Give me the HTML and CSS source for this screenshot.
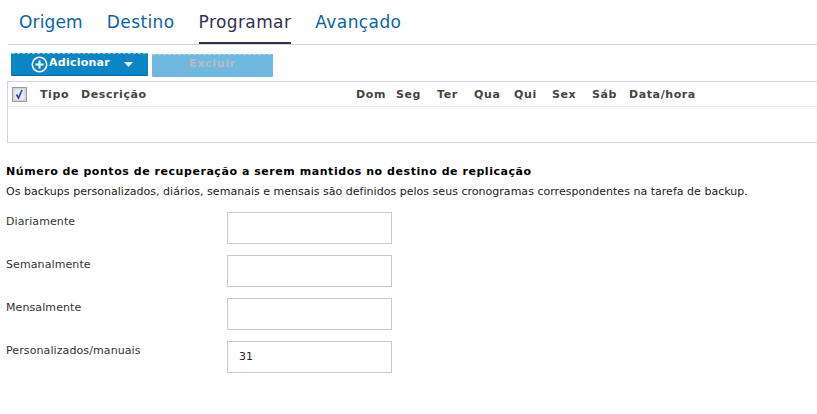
FILE: index.html
```html
<!DOCTYPE html>
<html lang="pt">
<head>
<meta charset="utf-8">
<title>Programar</title>
<link rel="stylesheet" href="styles.css">
</head>
<body>
<nav class="tabs">
  <a class="tab tab-first">Origem</a>
  <a class="tab">Destino</a>
  <a class="tab active">Programar</a>
  <a class="tab">Avançado</a>
</nav>
<div class="toolbar">
  <button class="btn btn-add">
    <svg class="plus" width="17" height="17" viewBox="0 0 17 17"><circle cx="8.5" cy="8.5" r="7.2" fill="none" stroke="#fff" stroke-width="1.6"/><path d="M8.5 4.5v8M4.5 8.5h8" stroke="#fff" stroke-width="2" fill="none"/></svg>
    <span>Adicionar</span>
    <svg class="caret" width="9" height="5" viewBox="0 0 9 5"><path d="M0 0h9L4.5 5z" fill="#fff"/></svg>
  </button>
  <button class="btn btn-del"><span>Excluir</span></button>
</div>
<section class="table">
  <div class="thead">
    <span class="check"><svg width="15" height="15" viewBox="0 0 15 15"><rect x=".5" y=".5" width="14" height="14" fill="#d4d6de" stroke="#9a9a9a"/><rect x="2.5" y="2.5" width="10" height="10" fill="#e8eaf4"/><path d="M4.5 7.5l2 3.5 3.5-8" fill="none" stroke="#2f3fa8" stroke-width="1.6"/></svg></span>
    <span>Tipo</span><span>Descrição</span><span>Dom</span><span>Seg</span><span>Ter</span><span>Qua</span><span>Qui</span><span>Sex</span><span>Sáb</span><span>Data/hora</span>
  </div>
  <div class="tbody"></div>
</section>
<section class="retention">
  <h2 class="title">Número de pontos de recuperação a serem mantidos no destino de replicação</h2>
  <p class="desc">Os backups personalizados, diários, semanais e mensais são definidos pelos seus cronogramas correspondentes na tarefa de backup.</p>
  <div class="form">
    <label class="label">Diariamente</label><input class="field" type="text">
    <label class="label">Semanalmente</label><input class="field" type="text">
    <label class="label">Mensalmente</label><input class="field" type="text">
    <label class="label">Personalizados/manuais</label><input class="field" type="text" value="31">
  </div>
</section>
</body>
</html>
```
FILE: styles.css
```css
* { box-sizing: border-box; }
html, body { margin: 0; padding: 0; background: #fff; }
body { width: 817px; height: 414px; overflow: hidden; font-family: "DejaVu Sans", sans-serif; font-size: 11px; color: #222; }
.tabs { display: flex; gap: 24px; margin-left: 8px; padding-left: 11px; height: 45px; border-bottom: 1px solid #d0d4dc; font-size: 17px; letter-spacing: .4px; }
.tab { height: 44px; padding-top: 11px; line-height: 22px; color: #0a64a8; white-space: nowrap; }
.tab-first { letter-spacing: .15px; }
.tab.active { color: #35304f; border-bottom: 2px solid #35304f; }
.toolbar { display: flex; gap: 4px; margin: 8px 0 0 11px; height: 24px; }
.btn { display: flex; align-items: center; border: 0; padding: 0; font: bold 11px "DejaVu Sans", sans-serif; color: #fff; height: 23px; border-radius: 1px; }
.btn-add { width: 137px; background: #0b85c6; border-top: 1px dashed #8fc8e8; border-bottom: 1px solid #0868a0; padding-left: 20px; }
.btn-add span { margin-left: 1px; position: relative; top: -2px; letter-spacing: .25px; }
.caret { margin-left: 14px; }
.btn-del { width: 121px; margin-top: 1px; justify-content: center; background: #6fb8e0; color: #b4bcc4; border-top: 1px dashed #a8d4ec; }
.btn-del span { position: relative; top: -3px; letter-spacing: .7px; }
.table { margin: 4px 0 0 7px; height: 62px; border: 1px solid #d0d4dc; border-right: 0; }
.thead { display: grid; grid-template-columns: 28px 41px 275px 40px 41px 37px 40px 38px 40px 37px 1fr; height: 25px; align-items: center; border-bottom: 1px solid #e8eaee; padding-left: 4px; font-weight: bold; color: #444; letter-spacing: .6px; }
.thead span { white-space: nowrap; }
.check { display: flex; }
.retention { margin: 21px 0 0 6px; }
.title { margin: 0; font-size: 11px; line-height: 16px; font-weight: bold; color: #000; letter-spacing: .55px; }
.desc { margin: 4px 0 0; line-height: 16px; font-size: 11px; letter-spacing: .025px; color: #222; }
.form { display: grid; grid-template-columns: 221px 165px; grid-auto-rows: 32px; row-gap: 11px; margin-top: 12px; }
.label { padding-top: 2px; line-height: 16px; color: #333; letter-spacing: .1px; }
.field { width: 165px; height: 32px; border: 1px solid #c8c8c8; padding: 0 11px 1px; font: 11px "DejaVu Sans", sans-serif; color: #222; background: #fff; outline: 0; }
```
